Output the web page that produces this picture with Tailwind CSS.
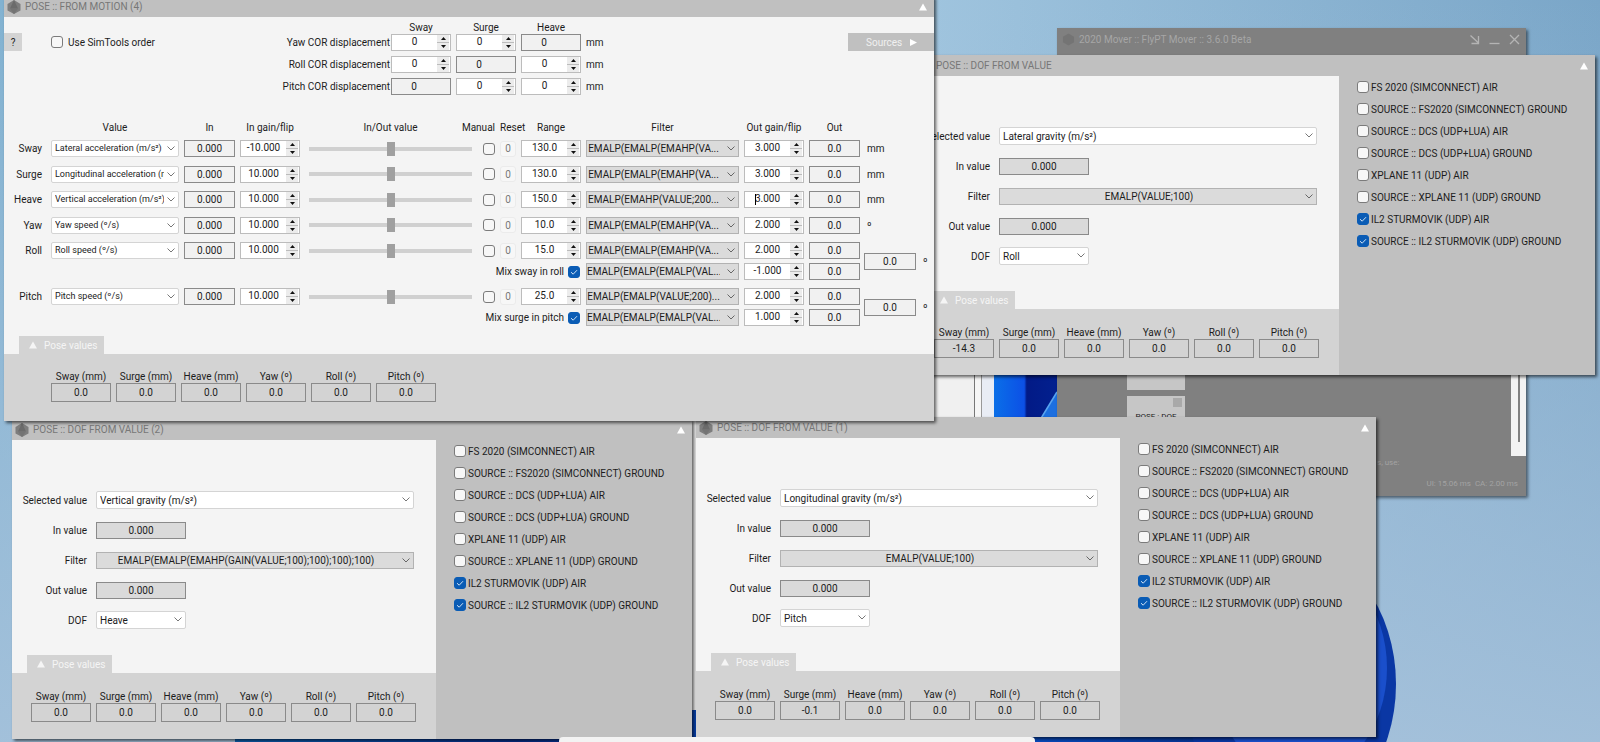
<!DOCTYPE html>
<html lang="en">
<head>
  <meta charset="UTF-8" />
  <meta name="viewport" content="width=device-width, initial-scale=1.0" />
  <title>FlyPT Mover - Pose windows</title>
  <script src="https://cdn.jsdelivr.net/npm/@tailwindcss/browser@4"></script>
</head>
<body class="relative h-screen overflow-hidden bg-linear-to-r from-[#82b2d1] via-[#9fc4de] via-58% to-[#7aa6c8] font-[Roboto,sans-serif] text-[10px] leading-[13px] text-[#1c1c1c]">

  <!-- Wallpaper -->
  <div class="absolute inset-0 bg-linear-to-b from-transparent to-[#a8c3dc]/85"></div>
  <svg class="absolute inset-0 h-full w-full" viewBox="0 0 1600 742" preserveAspectRatio="xMinYMin slice" aria-hidden="true">
    <defs>
      <linearGradient id="petal" x1="0" y1="0" x2="1" y2="0">
        <stop offset="0" stop-color="#0a6fe8" />
        <stop offset=".48" stop-color="#0c50e6" />
        <stop offset=".52" stop-color="#021a86" />
        <stop offset="1" stop-color="#02208f" />
      </linearGradient>
      <linearGradient id="base" x1="0" y1="0" x2="1" y2="0">
        <stop offset="0" stop-color="#0d62b4" />
        <stop offset=".25" stop-color="#062e8c" />
        <stop offset=".6" stop-color="#0a5ad8" />
        <stop offset="1" stop-color="#04206f" />
      </linearGradient>
    </defs>
    <rect x="235" y="700" width="1125" height="42" fill="url(#base)" />
    <ellipse cx="1290" cy="684" rx="106" ry="138" fill="#0a37a4" />
    <ellipse cx="1300" cy="668" rx="87" ry="110" fill="#1a4fcb" />
    <rect x="994" y="370" width="63" height="60" fill="url(#petal)" />
    <path d="M1040 420 L1057 392 V420 Z" fill="#1c6fe0" />
    <path d="M1040 420 L1057 392" stroke="#5aa5f0" stroke-width="1.5" />
  </svg>

  <!-- Document window at the back -->
  <div class="absolute top-[360px] left-[600px] flex h-[350px] w-[394px] justify-end bg-[#e9edf5]">
    <div class="w-full border-r border-[#777] bg-[#f0f0f0]"></div>
    <div class="w-[7px] shrink-0 border-r border-[#999] bg-[#f6f6f6]"></div>
    <div class="w-3 shrink-0"></div>
  </div>

  <!-- Main application window -->
  <section class="absolute top-7 left-[1057px] flex h-[468px] w-[469px] flex-col bg-[#808080] text-[#a6a6a6] shadow-[2px_2px_3px_rgba(0,0,0,0.5)]">
    <header class="flex h-[23px] shrink-0 items-center pr-[6px] pl-[5px]">
      <svg class="mr-1 h-[13px] w-[13px]" viewBox="0 0 14 14" aria-hidden="true"><path d="M7 0.5 13 4V10L7 13.500 1 10V4Z" fill="#747474" /></svg>
      <h1>2020 Mover :: FlyPT Mover :: 3.6.0 Beta</h1>
      <div class="ml-auto flex gap-[9px] text-[#b4b4b4]">
        <button type="button" aria-label="Shrink"><svg class="h-[11px] w-[11px]" viewBox="0 0 11 11" fill="none" stroke="currentColor" stroke-width="1.3"><path d="M1.500 1.500 9.500 9M9.500 2V9.500H2.500" /></svg></button>
        <button type="button" aria-label="Minimize"><svg class="h-[11px] w-[11px]" viewBox="0 0 11 11" fill="none" stroke="currentColor" stroke-width="1.3"><path d="M0.500 9.500H10.500" /></svg></button>
        <button type="button" aria-label="Close"><svg class="h-[11px] w-[11px]" viewBox="0 0 11 11" fill="none" stroke="currentColor" stroke-width="1.3"><path d="M1 1 10 10M10 1 1 10" /></svg></button>
      </div>
    </header>
    <div class="flex grow items-end justify-between pl-[70px]">
      <div class="flex h-full flex-col justify-start gap-[6px] pt-[279px] text-center text-[8px] leading-[9px] text-[#222]">
        <div class="h-[60px] w-[58px] bg-[#c6c6c6]"></div>
        <div class="flex h-[50px] w-[58px] flex-col bg-[#c6c6c6] pt-[2px]">
          <span class="mr-[3px] h-[9px] w-[9px] self-end bg-[#a9a9a9]"></span>
          <span class="mt-[5px]">POSE : DOF</span>
        </div>
      </div>
      <div class="flex h-[390px] w-[15px] justify-center bg-[#f3f3f3] pb-[14px]"><span class="w-[2px] bg-[#808080]"></span></div>
    </div>
    <footer class="flex h-10 shrink-0 flex-col justify-between pr-2 pb-[6px] text-[8px] text-[#a3a3a3]">
      <p class="pl-[320px]">s, use:</p>
      <p class="text-right whitespace-pre">UI: 15.06 ms  CA: 2.00 ms</p>
    </footer>
  </section>

  <!-- Pose windows -->
  <section id="dofRoll" class="absolute top-[55px] left-[915px] h-[320px] w-[680px] bg-[#c0c0c0] shadow-[2px_2px_3px_rgba(0,0,0,0.6)]"></section>
  <section id="dofHeave" class="absolute top-[419px] left-3 h-[320px] w-[680px] bg-[#c0c0c0] shadow-[2px_2px_3px_rgba(0,0,0,0.6)]"></section>
  <section id="dofPitch" class="absolute top-[417px] left-[696px] h-[320px] w-[680px] bg-[#c0c0c0] shadow-[2px_2px_3px_rgba(0,0,0,0.6)]"></section>
  <section id="fromMotion" class="absolute -top-1 left-1 flex h-[425px] w-[930px] flex-col bg-[#f4f4f4] shadow-[2px_2px_3px_rgba(0,0,0,0.6)]"></section>

  <!-- Taskbar -->
  <div class="absolute bottom-0 left-[559px] h-[5px] w-[476px] rounded-t-[4px] bg-[#f3f3f3]"></div>

  <script>
    const dofs = ['Sway', 'Surge', 'Heave', 'Yaw', 'Roll', 'Pitch'];
    const poseLabels = ['Sway (mm)', 'Surge (mm)', 'Heave (mm)', 'Yaw (º)', 'Roll (º)', 'Pitch (º)'];
    const sources = [
      ['FS 2020 (SIMCONNECT) AIR', false],
      ['SOURCE :: FS2020 (SIMCONNECT) GROUND', false],
      ['SOURCE :: DCS (UDP+LUA) AIR', false],
      ['SOURCE :: DCS (UDP+LUA) GROUND', false],
      ['XPLANE 11 (UDP) AIR', false],
      ['SOURCE :: XPLANE 11 (UDP) GROUND', false],
      ['IL2 STURMOVIK (UDP) AIR', true],
      ['SOURCE :: IL2 STURMOVIK (UDP) GROUND', true]
    ];

    const triangle = `<svg class="h-2 w-2" viewBox="0 0 8 8" fill="currentColor"><path d="M4 0.500 8 7.500H0Z"/></svg>`;

    function titleBar(text) {
      return `
        <header class="flex h-[21px] shrink-0 items-center bg-[#c0c0c0] pr-[7px] pl-[3px] text-[#777]">
          <svg class="mr-1 h-[14px] w-[14px]" viewBox="0 0 14 14" aria-hidden="true">
            <path d="M7 0 13.500 4V10.500L7 14 0.500 10.500V4Z" fill="#7d7d7d"/>
            <path d="M7 0 11 8.500H3Z" fill="#6b6b6b"/><path d="M3 8.500H11L7 14Z" fill="#747474"/>
          </svg>
          <h2>${text}</h2>
          <button type="button" aria-label="Collapse" class="ml-auto text-white">${triangle}</button>
        </header>`;
    }

    function checkbox(id, checked, label) {
      return `
        <span class="relative flex h-3 w-3 shrink-0">
          <input type="checkbox" id="${id}" ${label ? `aria-label="${label}"` : ''} ${checked ? 'checked' : ''} class="peer h-3 w-3 appearance-none rounded-[3px] border border-[#7b7b7b] bg-[#f7f7f7] checked:border-[#0a5cb5] checked:bg-[#0a5cb5]" />
          <svg class="pointer-events-none absolute inset-0 hidden h-3 w-3 peer-checked:block" viewBox="0 0 12 12" fill="none" stroke="#cfe2f5" stroke-width="1"><path d="M3 6.200 5.200 8.200 9 4.200"/></svg>
        </span>`;
    }

    function select(id, options, label) {
      return `
        <span class="relative flex">
          <select id="${id}" ${label ? `aria-label="${label}"` : ''} class="h-full w-full appearance-none rounded-[2px] border border-[#d4d4d4] bg-white pr-[14px] pl-[3px]">
            ${options.map(o => `<option>${o}</option>`).join('')}
          </select>
          <svg class="pointer-events-none absolute top-[6px] right-1 h-[5px] w-2" viewBox="0 0 8 5" fill="none" stroke="#777"><path d="M0.500 0.500 4 4 7.500 0.500"/></svg>
        </span>`;
    }

    function filterSelect(id, text, label) {
      return `
        <span class="relative flex">
          <select id="${id}" ${label ? `aria-label="${label}"` : ''} class="h-full w-full appearance-none border border-[#b2b2b2] bg-[#dbdbdb] pr-[18px] text-center">
            <option>${text}</option>
          </select>
          <svg class="pointer-events-none absolute top-[6px] right-1 h-[5px] w-2" viewBox="0 0 8 5" fill="none" stroke="#666"><path d="M0.500 0.500 4 4 7.500 0.500"/></svg>
        </span>`;
    }

    function spin(value, label, caret) {
      return `
        <span class="relative flex h-[17px] w-full border border-[#bcbcbc] bg-white">
          <input type="text" value="${value}" aria-label="${label}" class="w-full min-w-0 pb-[2px] text-center" />
          ${caret ? '<span class="absolute top-[2px] left-[10px] h-[11px] w-px bg-black"></span>' : ''}
          <span class="mr-px flex w-3 shrink-0 flex-col gap-px bg-[#bcbcbc]">
            <button type="button" aria-label="Up" class="flex h-[7px] items-center justify-center bg-[#ececec]"><svg class="h-[3px] w-[5px]" viewBox="0 0 5 3"><path d="M2.500 0 5 3H0Z" fill="#111"/></svg></button>
            <button type="button" aria-label="Down" class="flex h-[7px] items-center justify-center bg-[#ececec]"><svg class="h-[3px] w-[5px]" viewBox="0 0 5 3"><path d="M0 0H5L2.500 3Z" fill="#111"/></svg></button>
          </span>
        </span>`;
    }

    function readout(value, label) {
      return `<input type="text" readonly value="${value}" aria-label="${label}" class="h-[17px] w-full min-w-0 border border-[#8a8a8a] bg-[#f1f1f1] text-center" />`;
    }

    function poseTab() {
      return `<button type="button" class="ml-[15px] flex h-[18px] w-[85px] items-center gap-[7px] bg-[#d3d3d3] pl-[10px] text-[#f5f5f5]">${triangle}Pose values</button>`;
    }

    function poseValues(name, values) {
      return poseLabels.map((label, i) => `
        <div class="w-[60px] text-center">
          <label for="${name}-pose-${i}" class="block whitespace-nowrap">${label}</label>
          <input type="text" readonly id="${name}-pose-${i}" value="${values[i]}" class="block h-[19px] w-full border border-[#8a8a8a] bg-[#d3d3d3] text-center" />
        </div>`).join('');
    }

    function dofWindow(id, title, value, filter, dof, pose) {
      const label = (key, text) => `<label for="${id}-${key}" class="text-right">${text}</label>`;
      const box = key => `<input type="text" readonly id="${id}-${key}" value="0.000" class="h-[17px] w-[90px] border border-[#8a8a8a] bg-[#dadada] text-center" />`;
      document.getElementById(id).innerHTML = `
        ${titleBar(title)}
        <div class="grid grid-cols-[424px_1fr]">
          <div class="bg-[#f4f4f4]">
            <div class="grid h-[215px] auto-rows-[18px] grid-cols-[75px_318px] items-center gap-x-[9px] gap-y-3 pt-[51px]">
              ${label('value', 'Selected value')}<div class="grid h-[18px]">${select(id + '-value', [value])}</div>
              ${label('in', 'In value')}${box('in')}
              ${label('filter', 'Filter')}<div class="grid h-[17px]">${filterSelect(id + '-filter', filter)}</div>
              ${label('out', 'Out value')}${box('out')}
              ${label('dof', 'DOF')}<div class="grid h-[18px] w-[90px]">${select(id + '-dof', [dof, ...dofs.filter(d => d !== dof)])}</div>
            </div>
            ${poseTab()}
            <div class="flex h-[66px] gap-[5px] bg-[#d3d3d3] pt-[17px] pl-[19px]">${poseValues(id, pose)}</div>
          </div>
          <ul class="pl-[18px]">
            ${sources.map(([text, on], i) => `
              <li class="flex h-[22px] items-center gap-[2px]">${checkbox(`${id}-src-${i}`, on)}<label for="${id}-src-${i}" class="whitespace-nowrap">${text}</label></li>`).join('')}
          </ul>
        </div>`;
    }

    dofWindow('dofRoll', 'POSE :: DOF FROM VALUE', 'Lateral gravity (m/s²)', 'EMALP(VALUE;100)', 'Roll', ['-14.3', '0.0', '0.0', '0.0', '0.0', '0.0']);
    dofWindow('dofHeave', 'POSE :: DOF FROM VALUE (2)', 'Vertical gravity (m/s²)', 'EMALP(EMALP(EMAHP(GAIN(VALUE;100);100);100);100)', 'Heave', ['0.0', '0.0', '0.0', '0.0', '0.0', '0.0']);
    dofWindow('dofPitch', 'POSE :: DOF FROM VALUE (1)', 'Longitudinal gravity (m/s²)', 'EMALP(VALUE;100)', 'Pitch', ['0.0', '-0.1', '0.0', '0.0', '0.0', '0.0']);

    // Center of rotation: 0 marks the axis that can't be edited
    const corCols = 'grid grid-cols-[120px_60px_60px_60px_20px] items-center gap-x-[5px]';
    const corRows = [['Yaw', [1, 1, 0]], ['Roll', [1, 0, 1]], ['Pitch', [0, 1, 1]]];
    const corGrid = corRows.map(([name, axes]) => `
      <span class="-mr-1 text-right whitespace-nowrap">${name} COR displacement</span>
      ${axes.map((editable, i) => editable
        ? spin('0', `${name} COR ${dofs[i]}`)
        : `<input type="text" readonly value="0" aria-label="${name} COR ${dofs[i]}" class="h-[17px] w-full min-w-0 border border-[#8a8a8a] bg-[#f1f1f1] pr-[14px] text-center" />`).join('')}
      <span>mm</span>`).join('');

    const rowGrid = 'grid h-[17px] grid-cols-[42px_128px_51px_60px_171px_14px_16px_60px_153px_60px_51px] items-center gap-x-[5px]';

    function motionRow(name, value, gain, range, filter, outGain, caret) {
      return `
        <div class="${rowGrid}">
          <label for="motion-${name}" class="pr-1 text-right">${name}</label>
          <div class="grid h-[17px] text-[9px]">${select('motion-' + name, [value])}</div>
          ${readout('0.000', name + ' in')}
          ${spin(gain, name + ' in gain')}
          <input type="range" aria-label="${name} in/out value" class="mx-1 h-[14px] appearance-none bg-transparent [&::-webkit-slider-runnable-track]:h-1 [&::-webkit-slider-runnable-track]:bg-[#d0d0d0] [&::-webkit-slider-thumb]:-mt-[5px] [&::-webkit-slider-thumb]:h-[14px] [&::-webkit-slider-thumb]:w-2 [&::-webkit-slider-thumb]:appearance-none [&::-webkit-slider-thumb]:bg-[#a0a0a0]" />
          <span class="flex justify-end">${checkbox('manual-' + name, false, name + ' manual')}</span>
          <button type="button" class="h-4 rounded-[3px] border border-[#ebebeb] bg-[#f7f7f7] text-[#777]">0</button>
          ${spin(range, name + ' range')}
          <div class="grid h-[17px]">${filterSelect('filter-' + name, filter, name + ' filter')}</div>
          ${spin(outGain, name + ' out gain', caret)}
          ${readout('0.0', name + ' out')}
        </div>`;
    }

    function mixRow(id, text, filter, outGain) {
      return `
        <div class="grid h-[17px] grid-cols-[577px_153px_60px_51px] items-center gap-x-[5px]">
          <span class="flex items-center justify-end gap-1 pr-px"><label for="${id}">${text}</label>${checkbox(id, true)}</span>
          <div class="grid h-[17px]">${filterSelect('filter-' + id, filter, text + ' filter')}</div>
          ${spin(outGain, text + ' gain')}
          ${readout('0.0', text + ' out')}
        </div>`;
    }

    const withUnit = (row, unit) => `<div class="flex items-center gap-[7px]">${row}<span>${unit}</span></div>`;
    const mixed = (rows, name) => `
      <div class="flex items-center gap-1">
        <div class="flex flex-col gap-1">${rows}</div>
        <div class="flex items-center gap-[7px]"><span class="flex w-[52px]">${readout('0.0', name + ' total')}</span><span>º</span></div>
      </div>`;

    document.getElementById('fromMotion').innerHTML = `
      ${titleBar('POSE :: FROM MOTION (4)')}
      <div class="flex h-[102px] shrink-0 items-start">
        <button type="button" class="mt-4 h-[18px] w-[18px] bg-[#d3d3d3]">?</button>
        <div class="mt-4 ml-[29px] flex h-[18px] items-center gap-[5px]">${checkbox('simtools', false)}<label for="simtools">Use SimTools order</label></div>
        <div class="ml-auto pt-[3px]">
          <div class="${corCols} h-[14px] text-center"><span></span><span>Sway</span><span>Surge</span><span>Heave</span></div>
          <div class="${corCols} auto-rows-[17px] gap-y-[5px]">${corGrid}</div>
        </div>
        <button type="button" class="mt-4 ml-[242px] flex h-[18px] w-[86px] items-center gap-2 bg-[#c0c0c0] pl-[18px] text-[#f0f0f0]">Sources <svg class="h-[7px] w-[7px]" viewBox="0 0 7 7"><path d="M0 0 7 3.500 0 7Z" fill="#fff"/></svg></button>
      </div>
      <div class="${rowGrid} shrink-0 text-center whitespace-nowrap">
        <span></span><span>Value</span><span>In</span><span>In gain/flip</span><span>In/Out value</span>
        <span class="flex justify-end">Manual</span><span class="flex">Reset</span>
        <span>Range</span><span>Filter</span><span>Out gain/flip</span><span>Out</span>
      </div>
      <div class="mt-1 flex grow flex-col gap-2">
        <div class="flex h-[94px] flex-col justify-between">
          ${withUnit(motionRow('Sway', 'Lateral acceleration (m/s²)', '-10.000', '130.0', 'EMALP(EMALP(EMAHP(VA...', '3.000'), 'mm')}
          ${withUnit(motionRow('Surge', 'Longitudinal acceleration (m/s²)', '10.000', '130.0', 'EMALP(EMALP(EMAHP(VA...', '3.000'), 'mm')}
          ${withUnit(motionRow('Heave', 'Vertical acceleration (m/s²)', '10.000', '150.0', 'EMALP(EMAHP(VALUE;200...', '3.000', true), 'mm')}
          ${withUnit(motionRow('Yaw', 'Yaw speed (º/s)', '10.000', '10.0', 'EMALP(EMALP(EMAHP(VA...', '2.000'), 'º')}
        </div>
        ${mixed(motionRow('Roll', 'Roll speed (º/s)', '10.000', '15.0', 'EMALP(EMALP(EMAHP(VA...', '2.000') + mixRow('mixRoll', 'Mix sway in roll', 'EMALP(EMALP(EMALP(VAL...', '-1.000'), 'Roll')}
        ${mixed(motionRow('Pitch', 'Pitch speed (º/s)', '10.000', '25.0', 'EMALP(EMALP(VALUE;200)...', '2.000') + mixRow('mixPitch', 'Mix surge in pitch', 'EMALP(EMALP(EMALP(VAL...', '1.000'), 'Pitch')}
      </div>
      ${poseTab()}
      <div class="flex h-[67px] shrink-0 gap-[5px] bg-[#d3d3d3] pt-4 pl-[47px]">${poseValues('motion', ['0.0', '0.0', '0.0', '0.0', '0.0', '0.0'])}</div>`;
  </script>
</body>
</html>
